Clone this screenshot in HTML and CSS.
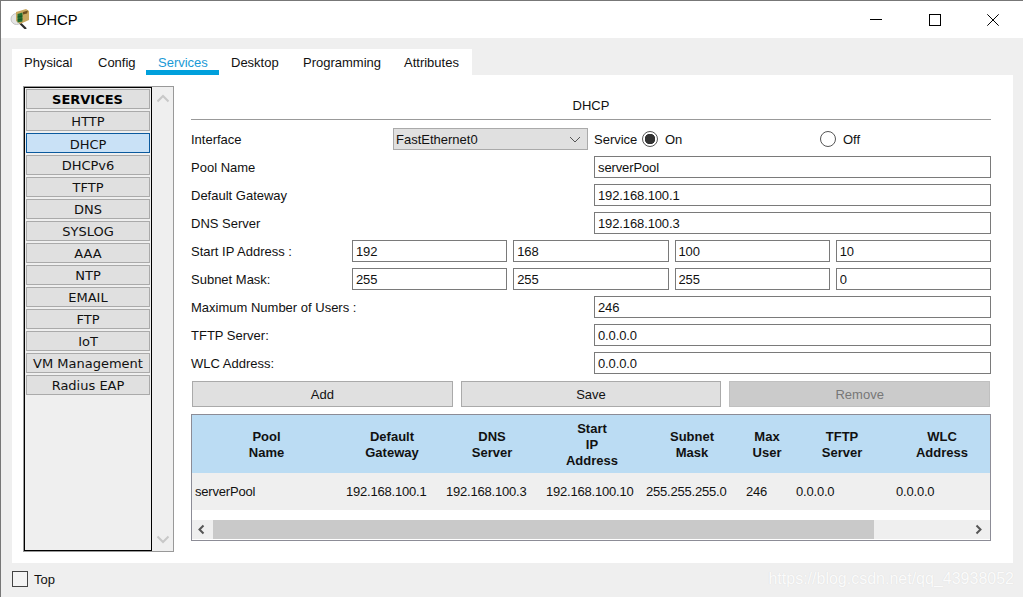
FILE: index.html
```html
<!DOCTYPE html>
<html lang="en">
<head>
<meta charset="utf-8">
<title>DHCP</title>
<link rel="stylesheet" href="styles.css">
</head>
<body>
<div class="window">
  <header class="titlebar">
    <svg class="app-icon" width="20" height="20" viewBox="0 0 20 20">
      <circle cx="6.5" cy="10" r="5.5" fill="#e4e4e4" stroke="#c4c4c4"/>
      <path d="M10 14l6 6" stroke="#2c2c2c" stroke-width="2.2"/>
      <path d="M6 3l10-3 3 2v9l-9 4-4-3z" fill="#c9a860"/>
      <path d="M7.5 5l5-1.5v9l-5 1z" fill="#2f7d3a"/>
      <path d="M9 5v8M11 4.500v8M7.500 8l5-1M7.500 11l5-1" stroke="#0f4a1c" stroke-width=".7"/>
      <path d="M13 3l5-1.500-1 3-4 1z" fill="#6b4f20"/>
    </svg>
    <span class="title">DHCP</span>
    <div class="controls">
      <span class="control"><svg width="12" height="12" viewBox="0 0 12 12"><path d="M0 5.500h12" stroke="#000"/></svg></span>
      <span class="control"><svg width="12" height="12" viewBox="0 0 12 12"><rect x=".5" y=".5" width="11" height="11" fill="none" stroke="#000"/></svg></span>
      <span class="control"><svg width="12" height="12" viewBox="0 0 12 12"><path d="M.3.300l11.400 11.400M11.700.300L.3 11.700" stroke="#000"/></svg></span>
    </div>
  </header>

  <div class="content">
    <nav class="tabs">
      <span class="tab">Physical</span>
      <span class="tab">Config</span>
      <span class="tab active">Services</span>
      <span class="tab">Desktop</span>
      <span class="tab">Programming</span>
      <span class="tab">Attributes</span>
    </nav>

    <section class="panel">
      <aside class="sidebar">
        <div class="list">
          <div class="item heading">SERVICES</div>
          <div class="item">HTTP</div>
          <div class="item selected">DHCP</div>
          <div class="item">DHCPv6</div>
          <div class="item">TFTP</div>
          <div class="item">DNS</div>
          <div class="item">SYSLOG</div>
          <div class="item">AAA</div>
          <div class="item">NTP</div>
          <div class="item">EMAIL</div>
          <div class="item">FTP</div>
          <div class="item">IoT</div>
          <div class="item">VM Management</div>
          <div class="item">Radius EAP</div>
        </div>
        <div class="vscroll">
          <svg width="14" height="9" viewBox="0 0 14 9"><path d="M1.500 7.500L7 2l5.500 5.500" fill="none" stroke="#c8c8c8" stroke-width="2"/></svg>
          <svg width="14" height="9" viewBox="0 0 14 9"><path d="M1.500 1.500L7 7l5.500-5.500" fill="none" stroke="#c8c8c8" stroke-width="2"/></svg>
        </div>
      </aside>

      <main class="main">
        <h1 class="heading-bar">DHCP</h1>
        <div class="form">
          <div class="row service-row">
            <span class="label iface">Interface</span>
            <div class="select">
              <span>FastEthernet0</span>
              <svg width="12" height="7" viewBox="0 0 12 7"><path d="M1 1l5 5 5-5" fill="none" stroke="#555"/></svg>
            </div>
            <span class="service">Service</span>
            <span class="radio on"></span>
            <span class="on-label">On</span>
            <span class="radio off"></span>
            <span class="off-label">Off</span>
          </div>
          <div class="row split"><span class="label">Pool Name</span><input class="field" value="serverPool" readonly></div>
          <div class="row split"><span class="label">Default Gateway</span><input class="field" value="192.168.100.1" readonly></div>
          <div class="row split"><span class="label">DNS Server</span><input class="field" value="192.168.100.3" readonly></div>
          <div class="row octets">
            <span class="label">Start IP Address :</span>
            <input class="field" value="192" readonly><input class="field" value="168" readonly><input class="field" value="100" readonly><input class="field" value="10" readonly>
          </div>
          <div class="row octets">
            <span class="label">Subnet Mask:</span>
            <input class="field" value="255" readonly><input class="field" value="255" readonly><input class="field" value="255" readonly><input class="field" value="0" readonly>
          </div>
          <div class="row split"><span class="label">Maximum Number of Users :</span><input class="field" value="246" readonly></div>
          <div class="row split"><span class="label">TFTP Server:</span><input class="field" value="0.0.0.0" readonly></div>
          <div class="row split"><span class="label">WLC Address:</span><input class="field" value="0.0.0.0" readonly></div>
        </div>

        <div class="buttons">
          <button class="btn">Add</button>
          <button class="btn">Save</button>
          <button class="btn disabled">Remove</button>
        </div>

        <div class="grid-box">
          <table class="pools">
            <thead>
              <tr>
                <th class="c-wide">Pool<br>Name</th>
                <th>Default<br>Gateway</th>
                <th>DNS<br>Server</th>
                <th>Start<br>IP<br>Address</th>
                <th>Subnet<br>Mask</th>
                <th class="c-narrow">Max<br>User</th>
                <th>TFTP<br>Server</th>
                <th>WLC<br>Address</th>
              </tr>
            </thead>
            <tbody>
              <tr>
                <td class="c-first">serverPool</td>
                <td>192.168.100.1</td>
                <td>192.168.100.3</td>
                <td>192.168.100.10</td>
                <td>255.255.255.0</td>
                <td>246</td>
                <td>0.0.0.0</td>
                <td>0.0.0.0</td>
              </tr>
            </tbody>
          </table>
          <div class="hscroll">
            <svg class="arrow" width="21" height="19" viewBox="0 0 21 19"><path d="M11.500 5.500L7.500 9.500l4 4" fill="none" stroke="#555" stroke-width="2"/></svg>
            <div class="thumb"></div>
            <svg class="arrow" width="20" height="19" viewBox="0 0 20 19"><path d="M6.500 5.500l4 4-4 4" fill="none" stroke="#555" stroke-width="2"/></svg>
          </div>
        </div>
      </main>
    </section>

    <footer class="footer">
      <span class="check"></span>
      <span>Top</span>
    </footer>
  </div>
  <div class="watermark">https://blog.csdn.net/qq_43938052</div>
</div>
</body>
</html>
```
FILE: styles.css
```css
* { box-sizing: border-box; }
html, body { margin: 0; padding: 0; }
body {
  width: 1023px;
  height: 597px;
  overflow: hidden;
  font-family: "Liberation Sans", Arial, sans-serif;
  font-size: 13px;
  color: #111;
}
.window {
  position: relative;
  width: 1023px;
  height: 597px;
  display: flex;
  flex-direction: column;
  background: #efefef;
  border-top: 1px solid #777;
  border-left: 1px solid #777;
}
.titlebar {
  height: 37px;
  flex: none;
  display: flex;
  align-items: center;
  background: #fff;
  padding-left: 9px;
}
.app-icon { flex: none; margin-right: 6px; margin-top: -1px; }
.title { font-size: 14.7px; color: #000; }
.controls { margin-left: auto; display: flex; padding-right: 1px; }
.control {
  width: 58.3px;
  height: 37px;
  display: flex;
  align-items: center;
  justify-content: center;
}
.content { padding: 11px 9px 0 11px; flex: 1; display: flex; flex-direction: column; }
.tabs {
  display: grid;
  grid-template-columns: 74px 60px 73px 72px 101px 80px;
  align-self: flex-start;
  height: 26px;
  background: #fff;
}
.tab {
  padding: 6px 0 0 12px;
  height: 26px;
  white-space: nowrap;
  border-bottom: 5px solid transparent;
  line-height: 15px;
}
.tab.active { color: #1a9ad6; border-bottom-color: #00a0dc; }
.panel {
  width: 1001px;
  height: 488px;
  flex: none;
  background: #fff;
  padding: 11px 0 0 11px;
  display: flex;
  gap: 17px;
  align-items: flex-start;
}
.sidebar {
  width: 151px;
  height: 466px;
  flex: none;
  display: flex;
  border: 1px solid #999;
  background: #efefef;
}
.list {
  width: 128px;
  height: 464px;
  border: 1px solid #000;
  padding: 1px;
  display: flex;
  flex-direction: column;
  gap: 2px;
}
.item {
  height: 20px;
  flex: none;
  background: #e0e0e0;
  border: 1px solid #aaa;
  font-family: "DejaVu Sans", Verdana, sans-serif;
  font-size: 13px;
  line-height: 20px;
  text-align: center;
  white-space: nowrap;
}
.item.heading { font-weight: 700; color: #000; padding-right: 1px; }
.item.selected { background: #c9e1f6; border-color: #0b5a9e; line-height: 21px; }
.vscroll {
  flex: 1;
  display: flex;
  flex-direction: column;
  justify-content: space-between;
  align-items: center;
  padding: 7px 0 7px;
}
.main { width: 800px; flex: none; }
.heading-bar {
  margin: 0;
  height: 34px;
  border-bottom: 1px solid #999;
  font-size: 13px;
  font-weight: 400;
  line-height: 39px;
  text-align: center;
}
.form { margin-top: 8px; display: flex; flex-direction: column; gap: 6px; }
.row { height: 22px; display: flex; align-items: center; }
.label { white-space: nowrap; flex: none; }
.split .label { width: 403px; }
.octets { gap: 6px; }
.octets .label { width: 155px; }
.octets .field { flex: 1 1 0; min-width: 0; }
.split .field { flex: 1; }
.field {
  height: 22px;
  font: inherit;
  letter-spacing: -.12px;
  color: #111;
  background: #fff;
  border: 1px solid #7a7a7a;
  border-radius: 0;
  padding: 0 2px 0 3px;
  outline: 0;
}
.iface { width: 202px; }
.select {
  width: 195px;
  height: 22px;
  flex: none;
  display: flex;
  align-items: center;
  justify-content: space-between;
  padding: 0 6px 0 2px;
  background: #e0e0e0;
  border: 1px solid #aaa;
}
.service { margin-left: 6px; width: 48px; flex: none; }
.radio {
  width: 16px;
  height: 16px;
  flex: none;
  border-radius: 50%;
  border: 1px solid #555;
  background: #fff;
}
.radio.on { background: radial-gradient(circle, #333 0 5px, #fff 5.500px); }
.on-label { margin-left: 7px; width: 155px; flex: none; }
.off-label { margin-left: 7px; }
.buttons { margin-top: 7px; display: flex; gap: 8px; padding: 0 1px; }
.btn {
  flex: 1 1 0;
  height: 26px;
  font: inherit;
  color: #111;
  background: #e0e0e0;
  border: 1px solid #aaa;
  border-radius: 0;
  padding: 0;
}
.btn.disabled { background: #cbcbcb; border-color: #c0c0c0; color: #777; }
.grid-box {
  margin-top: 7px;
  height: 127px;
  border: 1px solid #8c8c96;
  overflow: hidden;
  display: flex;
  flex-direction: column;
}
.pools {
  width: 800px;
  flex: none;
  table-layout: fixed;
  border-collapse: collapse;
}
.pools th {
  width: 100px;
  height: 58px;
  padding: 1px 0 0;
  background: #bbdcf3;
  font-weight: 700;
  line-height: 16px;
  text-align: center;
  color: #111;
}
.pools th.c-wide { width: 150px; padding-right: 1px; }
.pools th.c-narrow { width: 50px; }
.pools td {
  height: 37px;
  padding: 0 0 0 4px;
  background: #efefef;
  letter-spacing: -.2px;
  white-space: nowrap;
  overflow: hidden;
}
.pools td.c-first { padding-left: 3px; }
.hscroll {
  margin-top: 10px;
  height: 19px;
  flex: none;
  display: flex;
  background: #efefef;
}
.arrow { flex: none; }
.thumb { width: 661px; background: #c9c9c9; margin-right: auto; }
.footer {
  height: 32px;
  flex: none;
  display: flex;
  align-items: center;
  gap: 6px;
}
.check {
  width: 16px;
  height: 16px;
  border: 1px solid #444;
  background: #f4f4f4;
}
.watermark {
  position: absolute;
  right: 9px;
  bottom: 9px;
  font-size: 16px;
  color: #fbfbfb;
  text-shadow: 0 0 1px #d8d8d8;
  white-space: nowrap;
}
```
